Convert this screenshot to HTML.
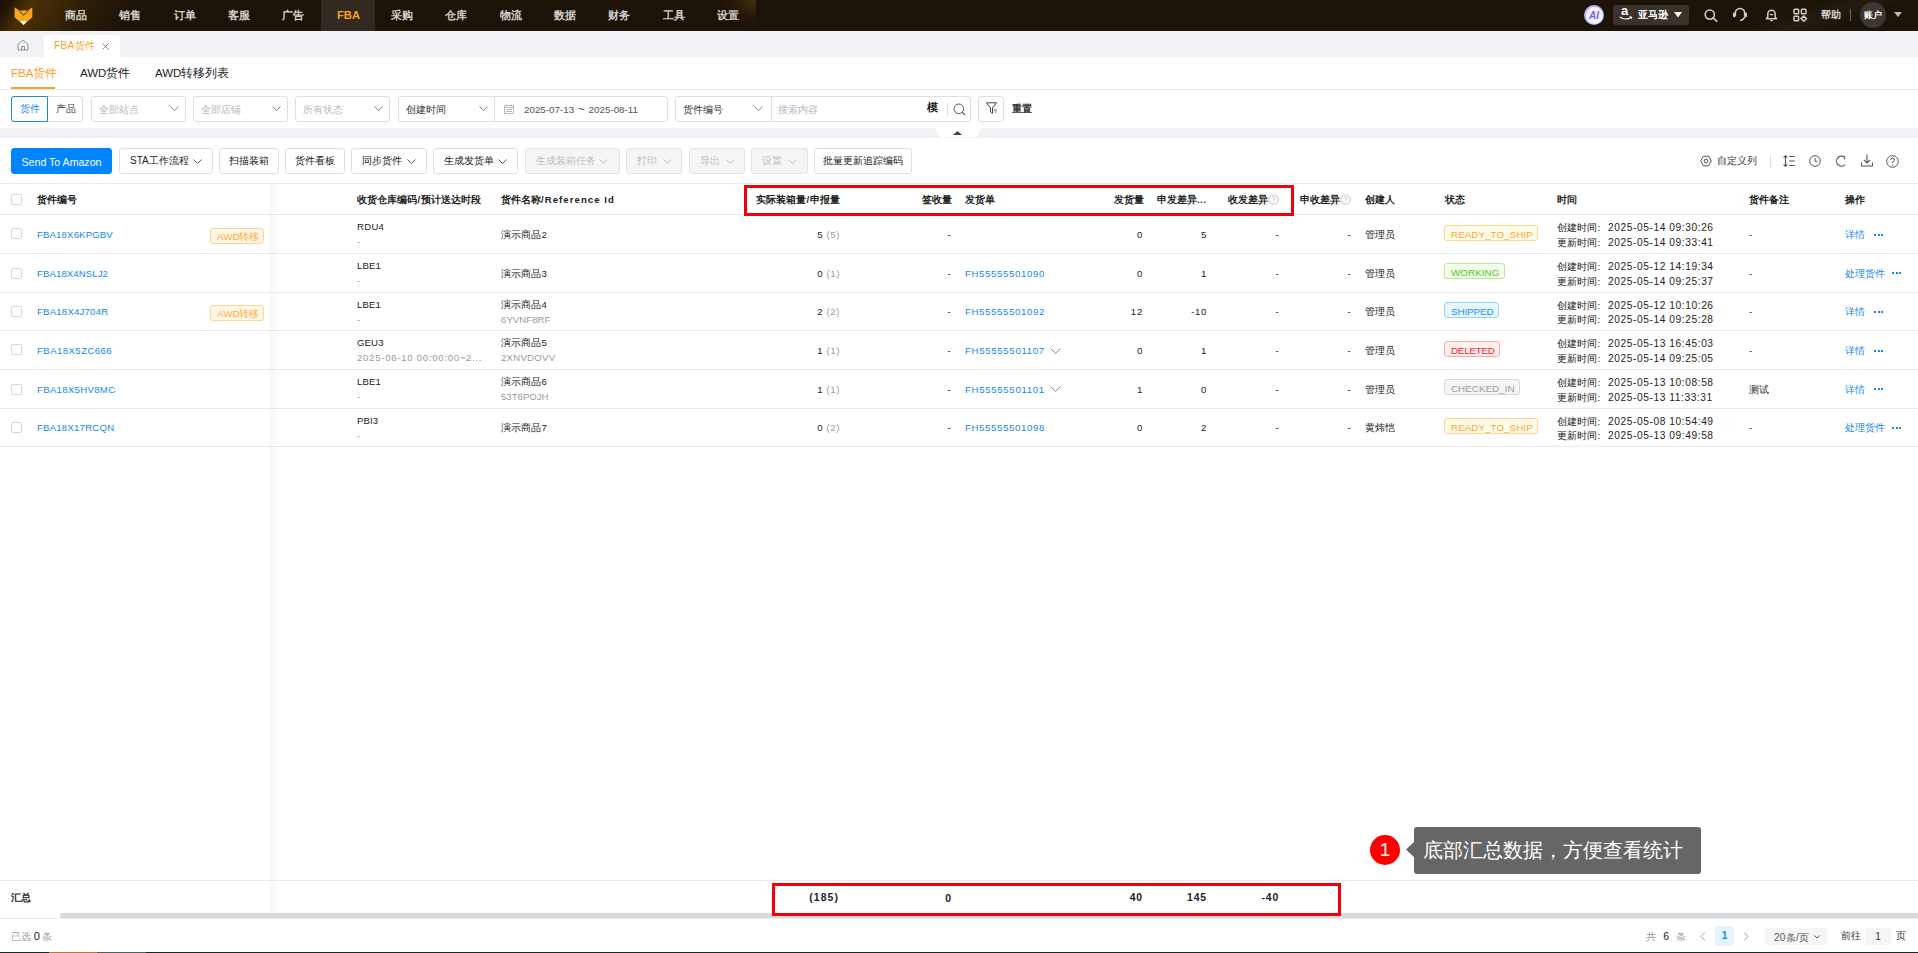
<!DOCTYPE html>
<html><head><meta charset="utf-8">
<style>
*{box-sizing:border-box;margin:0;padding:0}
html,body{width:1918px;height:953px;overflow:hidden;background:#fff}
body{position:relative;font-family:"Liberation Sans",sans-serif;font-size:10px;color:#222}
.a{position:absolute;white-space:nowrap}
/* nav */
#nav{position:absolute;left:0;top:0;width:1918px;height:31px;background:#1c1309;overflow:hidden}
#nav .glow{position:absolute;left:0;top:0;width:180px;height:31px;background:linear-gradient(122deg,#1a1107 0px,#221606 10px,#4a2e06 26px,#432a07 44px,#2c1d08 75px,#1c1309 120px)}
#nav .glow2{position:absolute;left:1700px;top:0;width:218px;height:31px;background:linear-gradient(160deg,rgba(255,255,255,0) 40%,rgba(255,240,220,.04) 55%,rgba(255,255,255,0) 70%)}
.ni{position:absolute;top:0;height:31px;line-height:31px;font-size:11.2px;color:#d2cdc8;font-weight:bold}
#tabbar{position:absolute;left:0;top:31px;width:1918px;height:26px;background:#f0f2f5}
.sel{position:absolute;top:96px;height:26px;border:1px solid #dcdfe6;border-radius:3px;background:#fff}
.ph{position:absolute;top:1px;line-height:24px;font-size:10px;color:#b4b8bf}
.chev{position:absolute}
.btn{position:absolute;top:148px;height:26px;border:1px solid #dcdfe6;border-radius:3px;background:#fff;line-height:24px;padding-top:0;font-size:10px;color:#222;text-align:center}
.btn.dis{background:#f5f5f5;color:#bdbdbd;border-color:#e4e4e4}
.th{position:absolute;top:185px;line-height:30px;font-size:9.6px;font-weight:bold;color:#222}
.hl{position:absolute;left:0;width:1918px;height:1px;background:#e8eaee}
.cb{position:absolute;left:11px;width:11px;height:11px;border:1px solid #d4d7dd;border-radius:2px;background:#fff}
.lk{color:#1687ef}
.g{color:#999}
.tag{position:absolute;height:16px;line-height:15px;padding-top:0;border:1px solid;border-radius:3px;font-size:9.8px;padding-left:6px;padding-right:0}
.n{letter-spacing:.4px}
.c{line-height:14px;font-size:9.6px}
.tm{font-size:11px;letter-spacing:.2px}
.dots{width:9px;height:2px}
.dots i{position:absolute;top:0;width:2px;height:2px;background:#1687ef}
.dots i:nth-child(1){left:0}.dots i:nth-child(2){left:3.5px}.dots i:nth-child(3){left:7px}
</style></head><body>

<!-- NAV -->
<div id="nav">
  <div class="glow"></div>
  <svg class="a" style="left:0;top:0" width="40" height="31" viewBox="0 0 40 31">
    <path d="M14.6 7.3 L19.3 10.4 L28.2 10.4 L32.3 7.3 L32.3 17.2 L23.5 25 L14.6 17.2 Z" fill="#f7a823"/>
    <path d="M19.3 10.6 L23.5 15.4 L28.2 10.6" fill="none" stroke="#3a2608" stroke-width="0.9"/>
    <path d="M20.2 21.3 L26.8 21.3 L23.5 25 Z" fill="#fff"/>
  </svg>
  <div class="a" style="left:321px;top:0;width:54px;height:31px;background:#322921"></div>
  <div class="ni" style="left:65px">商品</div>
  <div class="ni" style="left:119px">销售</div>
  <div class="ni" style="left:174px">订单</div>
  <div class="ni" style="left:228px">客服</div>
  <div class="ni" style="left:282px">广告</div>
  <div class="ni" style="left:337px;color:#f7a41d">FBA</div>
  <div class="ni" style="left:391px">采购</div>
  <div class="ni" style="left:445px">仓库</div>
  <div class="ni" style="left:500px">物流</div>
  <div class="ni" style="left:554px">数据</div>
  <div class="ni" style="left:608px">财务</div>
  <div class="ni" style="left:663px">工具</div>
  <div class="ni" style="left:717px">设置</div>

  <div class="glow2"></div>
  <div class="a" style="left:700px;top:0;width:56px;height:31px;background:radial-gradient(ellipse 40px 28px at 56px 0px,rgba(90,60,15,.7),rgba(60,40,10,.25) 60%,rgba(0,0,0,0) 100%)"></div>
  <div class="a" style="left:1584px;top:5px;width:20px;height:20px;border-radius:50%;background:linear-gradient(135deg,#c9a8ff,#7fd0ff);"></div>
  <div class="a" style="left:1585.5px;top:6.5px;width:17px;height:17px;border-radius:50%;background:#f4f2ff;"></div>
  <div class="a" style="left:1587px;top:6px;width:14px;line-height:19px;font-size:10px;font-weight:bold;font-style:italic;color:#7b5cf0;text-align:center">AI</div>
  <div class="a" style="left:1613px;top:5px;width:76px;height:20px;border-radius:3px;background:#3a332c"></div>
  <div class="a" style="left:1621px;top:1px;line-height:20px;font-size:13px;font-weight:bold;color:#fff">a</div>
  <svg class="a" style="left:1619px;top:16px" width="14" height="5" viewBox="0 0 14 5"><path d="M.8 1 Q6.5 4.8 12.5 1.2" fill="none" stroke="#fff" stroke-width="1.1"/><path d="M10.5 .6 L12.8 1 L12.3 3" fill="none" stroke="#fff" stroke-width=".9"/></svg>
  <div class="a ni" style="left:1638px;top:0;font-size:10px;color:#fff;line-height:30px">亚马逊</div>
  <svg class="a" style="left:1674px;top:12px" width="8" height="6" viewBox="0 0 8 6"><path d="M0 0 H8 L4 5.5 Z" fill="#fff"/></svg>
  <svg class="a" style="left:1704px;top:9px" width="14" height="13" viewBox="0 0 14 13"><circle cx="5.8" cy="5.6" r="4.6" fill="none" stroke="#d2cdc8" stroke-width="1.6"/><path d="M9.2 9 L12.6 12.2" stroke="#d2cdc8" stroke-width="1.7" stroke-linecap="round"/></svg>
  <svg class="a" style="left:1732px;top:7px" width="16" height="15" viewBox="0 0 16 15"><path d="M3.3 9 V6.2 A4.7 4.7 0 0 1 12.7 6.2 V9" fill="none" stroke="#d2cdc8" stroke-width="1.6"/><rect x="1" y="5.6" width="2.6" height="4.6" rx="1.2" fill="#d2cdc8"/><rect x="12.4" y="5.6" width="2.6" height="4.6" rx="1.2" fill="#d2cdc8"/><path d="M12.7 9.5 Q12 12.8 8 13.5" fill="none" stroke="#d2cdc8" stroke-width="1.4"/></svg>
  <svg class="a" style="left:1764px;top:8px" width="15" height="14" viewBox="0 0 15 14"><path d="M2.5 10.8 H12.5 L11.2 9 V6 A3.7 3.7 0 0 0 3.8 6 V9 Z" fill="none" stroke="#d2cdc8" stroke-width="1.5" stroke-linejoin="round"/><path d="M5.8 6.6 H9.2" stroke="#d2cdc8" stroke-width="1.3"/><path d="M6.3 12.6 H8.7" stroke="#d2cdc8" stroke-width="1.3"/></svg>
  <svg class="a" style="left:1793px;top:8px" width="15" height="14" viewBox="0 0 15 14"><rect x="1" y="1.2" width="4.6" height="4.6" rx=".8" fill="none" stroke="#d2cdc8" stroke-width="1.5"/><rect x="8.4" y="1.2" width="4.6" height="4.6" rx=".8" fill="none" stroke="#d2cdc8" stroke-width="1.5"/><rect x="1" y="8.2" width="4.6" height="4.6" rx=".8" fill="none" stroke="#d2cdc8" stroke-width="1.5"/><path d="M10.7 8 L13.4 10.6 L10.7 13.2 L8 10.6 Z" fill="none" stroke="#d2cdc8" stroke-width="1.5"/></svg>
  <div class="a ni" style="left:1821px;top:0;font-size:10px;color:#d8d3ce;line-height:30px">帮助</div>
  <div class="a" style="left:1850px;top:9px;width:1px;height:12px;background:#6a645e"></div>
  <div class="a" style="left:1860px;top:2px;width:26px;height:26px;border-radius:50%;background:#3c3731"></div>
  <div class="a ni" style="left:1864px;top:0;font-size:9px;color:#fff;line-height:30px">账户</div>
  <svg class="a" style="left:1894px;top:12px" width="8" height="6" viewBox="0 0 8 6"><path d="M0 0 H8 L4 5 Z" fill="#bdb8b3"/></svg>
</div>

<!-- TAB BAR -->
<div id="tabbar">
  <svg class="a" style="left:17px;top:8px" width="12" height="12" viewBox="0 0 12 12"><path d="M1 5.5 L6 1 L11 5.5 V11 H1 Z M4.5 11 V7.5 H7.5 V11" fill="none" stroke="#8a8f98" stroke-width="1"/></svg>
  <div class="a" style="left:44px;top:4px;width:76px;height:22px;background:#fff;border-radius:3px 3px 0 0"></div>
  <div class="a" style="left:54px;top:4px;line-height:22px;font-size:10.2px;color:#ff9d26;letter-spacing:.25px">FBA货件</div>
  <svg class="a" style="left:101.5px;top:11.5px" width="7" height="7" viewBox="0 0 7 7"><path d="M.5 .5 L6.5 6.5 M6.5 .5 L.5 6.5" stroke="#8a8a8a" stroke-width="1"/></svg>
</div>

<!-- SUB TABS -->
<div class="a" style="left:11px;top:65px;line-height:16px;font-size:11.5px;color:#ff9d26">FBA货件</div>
<div class="a" style="left:80px;top:65px;line-height:16px;font-size:11.5px;color:#222">AWD货件</div>
<div class="a" style="left:155px;top:65px;line-height:16px;font-size:11.5px;color:#222">AWD转移列表</div>
<div class="a" style="left:11px;top:87px;width:44px;height:2px;background:#ff9d26"></div>
<div class="a" style="left:0;top:89px;width:1918px;height:1px;background:#e8eaee"></div>

<!-- FILTERS -->
<div class="sel" style="left:11px;width:72px"></div>
<div class="a" style="left:11px;top:96px;width:37px;height:26px;border:1px solid #1687ef;border-radius:3px 0 0 3px"></div>
<div class="a" style="left:20px;top:96px;line-height:26px;font-size:10px;color:#1687ef">货件</div>
<div class="a" style="left:56px;top:96px;line-height:26px;font-size:10px;color:#444">产品</div>

<div class="sel" style="left:91px;width:95px"><span class="ph" style="left:7px">全部站点</span><svg class="chev" style="left:78px;top:8.5px" width="9" height="5" viewBox="0 0 9 5"><path d="M.5 .5 L4.5 4.5 L8.5 .5" fill="none" stroke="#888" stroke-width="1"/></svg></div>
<div class="sel" style="left:193px;width:95px"><span class="ph" style="left:7px">全部店铺</span><svg class="chev" style="left:78px;top:8.5px" width="9" height="5" viewBox="0 0 9 5"><path d="M.5 .5 L4.5 4.5 L8.5 .5" fill="none" stroke="#888" stroke-width="1"/></svg></div>
<div class="sel" style="left:295px;width:95px"><span class="ph" style="left:7px">所有状态</span><svg class="chev" style="left:78px;top:8.5px" width="9" height="5" viewBox="0 0 9 5"><path d="M.5 .5 L4.5 4.5 L8.5 .5" fill="none" stroke="#888" stroke-width="1"/></svg></div>
<div class="sel" style="left:398px;width:270px"><span class="ph" style="left:7px;color:#333">创建时间</span><svg class="chev" style="left:80px;top:8.5px" width="9" height="5" viewBox="0 0 9 5"><path d="M.5 .5 L4.5 4.5 L8.5 .5" fill="none" stroke="#888" stroke-width="1"/></svg>
  <div class="a" style="left:95px;top:0;width:1px;height:24px;background:#dcdfe6"></div>
  <svg class="a" style="left:105px;top:7px" width="10" height="10" viewBox="0 0 10 10"><path d="M.5 1.5 H9.5 V9.5 H.5 Z M.5 3.5 H9.5 M2.5 .5 V2 M7.5 .5 V2 M2 5.5 H8 M2 7.5 H8" fill="none" stroke="#aaa" stroke-width=".8"/></svg>
  <span class="ph" style="left:125px;color:#555;font-size:9.8px;line-height:25px;top:0">2025-07-13 <span style="font-size:12px;margin:0 1px">~</span> 2025-08-11</span>
</div>
<div class="sel" style="left:675px;width:296px"><span class="ph" style="left:7px;color:#333">货件编号</span><svg class="chev" style="left:78px;top:8.5px" width="9" height="5" viewBox="0 0 9 5"><path d="M.5 .5 L4.5 4.5 L8.5 .5" fill="none" stroke="#888" stroke-width="1"/></svg>
  <div class="a" style="left:95px;top:0;width:1px;height:24px;background:#dcdfe6"></div>
  <span class="ph" style="left:102px">搜索内容</span>
  <span class="a" style="left:251px;top:-2px;line-height:24px;font-size:11px;font-weight:bold;color:#222">模</span>
  <div class="a" style="left:271px;top:6px;width:1px;height:12px;background:#ddd"></div>
  <svg class="a" style="left:277px;top:6px" width="13" height="13" viewBox="0 0 13 13"><circle cx="5.8" cy="5.8" r="4.8" fill="none" stroke="#555" stroke-width="1"/><path d="M9.3 9.3 L12 12" stroke="#555" stroke-width="1.1"/></svg>
</div>
<div class="sel" style="left:978px;width:26px"><svg class="a" style="left:7px;top:5px" width="12" height="13" viewBox="0 0 12 13"><path d="M.5 .8 H10.5 L6.5 6 V11.5 L4.5 10 V6 Z" fill="none" stroke="#444" stroke-width="1"/><path d="M8 8 H11 M8.5 10 H10.5" stroke="#444" stroke-width=".8"/></svg></div>
<div class="a" style="left:1012px;top:96px;line-height:26px;font-size:10px;font-weight:bold;color:#333">重置</div>

<!-- GRAY BAND -->
<div class="a" style="left:0;top:128px;width:1918px;height:10px;background:#f0f2f5"></div>
<svg class="a" style="left:935px;top:128px" width="46" height="10" viewBox="0 0 46 10"><path d="M0 0 H46 L43 7 Q42 9.3 39.5 9.3 H6.5 Q4 9.3 3 7 Z" fill="#fff"/></svg>
<svg class="a" style="left:953px;top:131px" width="9" height="4" viewBox="0 0 9 4"><path d="M0 4 L4.5 0 L9 4 Z" fill="#444"/></svg>

<!-- TOOLBAR -->
<div class="btn" style="left:11px;width:101px;background:#0084ff;border-color:#0084ff;color:#fff;font-size:10.6px;line-height:25px;padding-top:1px">Send To Amazon</div>
<div class="btn" style="left:119px;width:94px;text-align:left;padding-left:10px">STA工作流程<svg class="a" style="left:73px;top:10px" width="9" height="5" viewBox="0 0 9 5"><path d="M.5 .5 L4.5 4.5 L8.5 .5" fill="none" stroke="#555" stroke-width="1"/></svg></div>
<div class="btn" style="left:219px;width:60px">扫描装箱</div>
<div class="btn" style="left:285px;width:60px">货件看板</div>
<div class="btn" style="left:351px;width:76px;text-align:left;padding-left:10px">同步货件<svg class="a" style="left:55px;top:10px" width="9" height="5" viewBox="0 0 9 5"><path d="M.5 .5 L4.5 4.5 L8.5 .5" fill="none" stroke="#555" stroke-width="1"/></svg></div>
<div class="btn" style="left:433px;width:85px;text-align:left;padding-left:10px">生成发货单<svg class="a" style="left:64px;top:10px" width="9" height="5" viewBox="0 0 9 5"><path d="M.5 .5 L4.5 4.5 L8.5 .5" fill="none" stroke="#555" stroke-width="1"/></svg></div>
<div class="btn dis" style="left:525px;width:95px;text-align:left;padding-left:10px">生成装箱任务<svg class="a" style="left:73px;top:10px" width="9" height="5" viewBox="0 0 9 5"><path d="M.5 .5 L4.5 4.5 L8.5 .5" fill="none" stroke="#bbb" stroke-width="1"/></svg></div>
<div class="btn dis" style="left:626px;width:56px;text-align:left;padding-left:10px">打印<svg class="a" style="left:36px;top:10px" width="9" height="5" viewBox="0 0 9 5"><path d="M.5 .5 L4.5 4.5 L8.5 .5" fill="none" stroke="#bbb" stroke-width="1"/></svg></div>
<div class="btn dis" style="left:689px;width:56px;text-align:left;padding-left:10px">导出<svg class="a" style="left:36px;top:10px" width="9" height="5" viewBox="0 0 9 5"><path d="M.5 .5 L4.5 4.5 L8.5 .5" fill="none" stroke="#bbb" stroke-width="1"/></svg></div>
<div class="btn dis" style="left:751px;width:57px;text-align:left;padding-left:10px">设置<svg class="a" style="left:36px;top:10px" width="9" height="5" viewBox="0 0 9 5"><path d="M.5 .5 L4.5 4.5 L8.5 .5" fill="none" stroke="#bbb" stroke-width="1"/></svg></div>
<div class="btn" style="left:814px;width:98px">批量更新追踪编码</div>

<!-- right tools -->
<svg class="a" style="left:1700px;top:155px" width="12" height="12" viewBox="0 0 12 12"><path d="M.7 6 L3.4 1.2 H8.6 L11.3 6 L8.6 10.8 H3.4 Z" fill="none" stroke="#555" stroke-width="1"/><circle cx="6" cy="6" r="1.9" fill="none" stroke="#555" stroke-width="1"/></svg>
<div class="a" style="left:1717px;top:148px;line-height:26px;font-size:10px;color:#333">自定义列</div>
<div class="a" style="left:1770px;top:155px;width:1px;height:12px;background:#ddd"></div>
<svg class="a" style="left:1783px;top:155px" width="13" height="12" viewBox="0 0 13 12"><path d="M2.5 .8 V11.2 M.6 2.6 L2.5 .7 L4.4 2.6 M.6 9.4 L2.5 11.3 L4.4 9.4 M6.2 1.5 H11.8 M6.2 6 H11.8 M6.2 10.5 H11.8" fill="none" stroke="#555" stroke-width="1.1"/></svg>
<svg class="a" style="left:1809px;top:155px" width="12" height="12" viewBox="0 0 12 12"><circle cx="6" cy="6" r="5.3" fill="none" stroke="#555" stroke-width="1"/><path d="M6 3 V6.3 H8.5" fill="none" stroke="#555" stroke-width="1"/></svg>
<svg class="a" style="left:1835px;top:155px" width="12" height="12" viewBox="0 0 12 12"><path d="M9.6 2.2 A5 5 0 1 0 10 9.6" fill="none" stroke="#555" stroke-width="1.1"/><path d="M7.4 1.4 L9.8 2 L9.4 4.4" fill="none" stroke="#555" stroke-width="1"/></svg>
<svg class="a" style="left:1861px;top:154px" width="12" height="13" viewBox="0 0 12 13"><path d="M6 .5 V9 M2.8 5.8 L6 9 L9.2 5.8 M.5 8.5 V12 H11.5 V8.5" fill="none" stroke="#555" stroke-width="1.1"/></svg>
<svg class="a" style="left:1886px;top:155px" width="13" height="13" viewBox="0 0 13 13"><circle cx="6.5" cy="6.5" r="5.8" fill="none" stroke="#555" stroke-width="1"/><path d="M4.6 5 A1.9 1.9 0 1 1 6.5 7 V8" fill="none" stroke="#555" stroke-width="1"/><circle cx="6.5" cy="9.8" r=".6" fill="#555"/></svg>

<!-- TABLE -->
<div class="hl" style="top:183px"></div>
<div class="hl" style="top:214px"></div>
<div class="cb" style="top:194px"></div>
<div class="th" style="left:37px">货件编号</div>
<div class="th" style="left:357px">收货仓库编码<span style="margin:0 .5px">/</span>预计送达时段</div>
<div class="th" style="left:501px">货件名称<span style="letter-spacing:1.05px">/Reference Id</span></div>
<div class="th" style="left:756px">实际装箱量<span style="margin:0 .5px">/</span>申报量</div>
<div class="th" style="left:922px">签收量</div>
<div class="th" style="left:965px">发货单</div>
<div class="th" style="left:1114px">发货量</div>
<div class="th" style="left:1157px">申发差异<span style="letter-spacing:.4px">...</span></div>
<div class="th" style="left:1228px">收发差异</div>
<div class="th" style="left:1300px">申收差异</div>
<div class="th" style="left:1365px">创建人</div>
<div class="th" style="left:1445px">状态</div>
<div class="th" style="left:1557px">时间</div>
<div class="th" style="left:1749px">货件备注</div>
<div class="th" style="left:1845px">操作</div>
<svg class="a" style="left:1268px;top:194px" width="11" height="11" viewBox="0 0 11 11"><circle cx="5.5" cy="5.5" r="4.8" fill="none" stroke="#bbb" stroke-width=".9"/><path d="M4 4.3 A1.5 1.5 0 1 1 5.5 5.8 V6.6" fill="none" stroke="#bbb" stroke-width=".9"/><circle cx="5.5" cy="8.2" r=".5" fill="#bbb"/></svg>
<svg class="a" style="left:1340px;top:194px" width="11" height="11" viewBox="0 0 11 11"><circle cx="5.5" cy="5.5" r="4.8" fill="none" stroke="#bbb" stroke-width=".9"/><path d="M4 4.3 A1.5 1.5 0 1 1 5.5 5.8 V6.6" fill="none" stroke="#bbb" stroke-width=".9"/><circle cx="5.5" cy="8.2" r=".5" fill="#bbb"/></svg>

<div id="rows">
<div class="hl" style="top:253px"></div>
<div class="cb" style="top:228px"></div>
<div class="a c lk" style="left:37px;top:227.5px;letter-spacing:0.15px;">FBA18X6KPGBV</div>
<div class="tag" style="left:210px;top:228px;width:54px;background:#fff7e6;border-color:#ffd591;color:#ffa940;">AWD转移</div>
<div class="a c " style="left:357px;top:220.0px;letter-spacing:0.26px;">RDU4</div>
<div class="a c g" style="left:357px;top:235.0px;letter-spacing:0.27px;">-</div>
<div class="a c " style="left:501px;top:227.5px;letter-spacing:0.15px;">演示商品2</div>
<div class="a c " style="right:1078px;top:227.5px;letter-spacing:0.60px;">5 <span class="g">(5)</span></div>
<div class="a c " style="right:967px;top:227.5px;letter-spacing:0.27px;">-</div>
<div class="a c " style="right:775px;top:227.5px;letter-spacing:0.77px;">0</div>
<div class="a c " style="right:711px;top:227.5px;letter-spacing:0.77px;">5</div>
<div class="a c " style="right:639px;top:227.5px;letter-spacing:0.27px;">-</div>
<div class="a c " style="right:567px;top:227.5px;letter-spacing:0.27px;">-</div>
<div class="a c " style="left:1365px;top:227.5px;">管理员</div>
<div class="tag" style="left:1444px;top:225px;width:94px;background:#fffbe9;border-color:#ffd591;color:#ffa630;font-size:9.8px;letter-spacing:0.06px;padding-top:.5px">READY_TO_SHIP</div>
<div class="a c " style="left:1557px;top:221.0px;letter-spacing:0.11px;">创建时间:</div>
<div class="a c " style="left:1608px;top:221.0px;letter-spacing:0.67px;;font-size:10.2px;letter-spacing:.58px">2025-05-14 09:30:26</div>
<div class="a c " style="left:1557px;top:235.5px;letter-spacing:0.11px;">更新时间:</div>
<div class="a c " style="left:1608px;top:235.5px;letter-spacing:0.67px;;font-size:10.2px;letter-spacing:.58px">2025-05-14 09:33:41</div>
<div class="a c " style="left:1749px;top:227.5px;letter-spacing:0.27px;">-</div>
<div class="a c lk" style="left:1845px;top:227.5px;">详情</div>
<div class="a dots" style="left:1874px;top:234px"><i></i><i></i><i></i></div>
<div class="hl" style="top:292px"></div>
<div class="cb" style="top:268px"></div>
<div class="a c lk" style="left:37px;top:266.5px;letter-spacing:0.10px;">FBA18X4NSLJ2</div>
<div class="a c " style="left:357px;top:259.0px;letter-spacing:0.16px;">LBE1</div>
<div class="a c g" style="left:357px;top:274.0px;letter-spacing:0.27px;">-</div>
<div class="a c " style="left:501px;top:266.5px;letter-spacing:0.15px;">演示商品3</div>
<div class="a c " style="right:1078px;top:266.5px;letter-spacing:0.60px;">0 <span class="g">(1)</span></div>
<div class="a c " style="right:967px;top:266.5px;letter-spacing:0.27px;">-</div>
<div class="a c lk" style="left:965px;top:266.5px;letter-spacing:0.65px;">FH55555501090</div>
<div class="a c " style="right:775px;top:266.5px;letter-spacing:0.77px;">0</div>
<div class="a c " style="right:711px;top:266.5px;letter-spacing:0.77px;">1</div>
<div class="a c " style="right:639px;top:266.5px;letter-spacing:0.27px;">-</div>
<div class="a c " style="right:567px;top:266.5px;letter-spacing:0.27px;">-</div>
<div class="a c " style="left:1365px;top:266.5px;">管理员</div>
<div class="tag" style="left:1444px;top:263px;width:61px;background:#f3ffeb;border-color:#b7eb8f;color:#52c41a;font-size:9.8px;letter-spacing:0.08px;padding-top:.5px">WORKING</div>
<div class="a c " style="left:1557px;top:260.0px;letter-spacing:0.11px;">创建时间:</div>
<div class="a c " style="left:1608px;top:260.0px;letter-spacing:0.67px;;font-size:10.2px;letter-spacing:.58px">2025-05-12 14:19:34</div>
<div class="a c " style="left:1557px;top:274.5px;letter-spacing:0.11px;">更新时间:</div>
<div class="a c " style="left:1608px;top:274.5px;letter-spacing:0.67px;;font-size:10.2px;letter-spacing:.58px">2025-05-14 09:25:37</div>
<div class="a c " style="left:1749px;top:266.5px;letter-spacing:0.27px;">-</div>
<div class="a c lk" style="left:1845px;top:266.5px;">处理货件</div>
<div class="a dots" style="left:1892px;top:272px"><i></i><i></i><i></i></div>
<div class="hl" style="top:330px"></div>
<div class="cb" style="top:306px"></div>
<div class="a c lk" style="left:37px;top:305.0px;letter-spacing:0.21px;">FBA18X4J704R</div>
<div class="tag" style="left:210px;top:305px;width:54px;background:#fff7e6;border-color:#ffd591;color:#ffa940;">AWD转移</div>
<div class="a c " style="left:357px;top:297.5px;letter-spacing:0.16px;">LBE1</div>
<div class="a c g" style="left:357px;top:312.5px;letter-spacing:0.27px;">-</div>
<div class="a c " style="left:501px;top:297.5px;letter-spacing:0.15px;">演示商品4</div>
<div class="a c g" style="left:501px;top:312.5px;letter-spacing:0.06px;">6YVNF8RF</div>
<div class="a c " style="right:1078px;top:305.0px;letter-spacing:0.60px;">2 <span class="g">(2)</span></div>
<div class="a c " style="right:967px;top:305.0px;letter-spacing:0.27px;">-</div>
<div class="a c lk" style="left:965px;top:305.0px;letter-spacing:0.65px;">FH55555501092</div>
<div class="a c " style="right:775px;top:305.0px;letter-spacing:0.77px;">12</div>
<div class="a c " style="right:711px;top:305.0px;letter-spacing:0.60px;">-10</div>
<div class="a c " style="right:639px;top:305.0px;letter-spacing:0.27px;">-</div>
<div class="a c " style="right:567px;top:305.0px;letter-spacing:0.27px;">-</div>
<div class="a c " style="left:1365px;top:305.0px;">管理员</div>
<div class="tag" style="left:1444px;top:302px;width:55px;background:#e8f6ff;border-color:#91d5ff;color:#1890ff;font-size:9.8px;letter-spacing:-0.09px;padding-top:.5px">SHIPPED</div>
<div class="a c " style="left:1557px;top:298.5px;letter-spacing:0.11px;">创建时间:</div>
<div class="a c " style="left:1608px;top:298.5px;letter-spacing:0.67px;;font-size:10.2px;letter-spacing:.58px">2025-05-12 10:10:26</div>
<div class="a c " style="left:1557px;top:313.0px;letter-spacing:0.11px;">更新时间:</div>
<div class="a c " style="left:1608px;top:313.0px;letter-spacing:0.67px;;font-size:10.2px;letter-spacing:.58px">2025-05-14 09:25:28</div>
<div class="a c " style="left:1749px;top:305.0px;letter-spacing:0.27px;">-</div>
<div class="a c lk" style="left:1845px;top:305.0px;">详情</div>
<div class="a dots" style="left:1874px;top:311px"><i></i><i></i><i></i></div>
<div class="hl" style="top:369px"></div>
<div class="cb" style="top:344px"></div>
<div class="a c lk" style="left:37px;top:343.5px;letter-spacing:0.44px;">FBA18X5ZC666</div>
<div class="a c " style="left:357px;top:336.0px;letter-spacing:0.12px;">GEU3</div>
<div class="a c g" style="left:357px;top:351.0px;letter-spacing:0.72px;">2025-06-10 00:00:00~2...</div>
<div class="a c " style="left:501px;top:336.0px;letter-spacing:0.15px;">演示商品5</div>
<div class="a c g" style="left:501px;top:351.0px;letter-spacing:0.26px;">2XNVDOVV</div>
<div class="a c " style="right:1078px;top:343.5px;letter-spacing:0.60px;">1 <span class="g">(1)</span></div>
<div class="a c " style="right:967px;top:343.5px;letter-spacing:0.27px;">-</div>
<div class="a c lk" style="left:965px;top:343.5px;letter-spacing:0.70px;">FH55555501107</div>
<svg class="a" style="left:1050px;top:348px" width="11" height="6" viewBox="0 0 11 6"><path d="M.5 .5 L5.5 5.3 L10.5 .5" fill="none" stroke="#888" stroke-width="1"/></svg>
<div class="a c " style="right:775px;top:343.5px;letter-spacing:0.77px;">0</div>
<div class="a c " style="right:711px;top:343.5px;letter-spacing:0.77px;">1</div>
<div class="a c " style="right:639px;top:343.5px;letter-spacing:0.27px;">-</div>
<div class="a c " style="right:567px;top:343.5px;letter-spacing:0.27px;">-</div>
<div class="a c " style="left:1365px;top:343.5px;">管理员</div>
<div class="tag" style="left:1444px;top:341px;width:56px;background:#fff0f0;border-color:#ffa3a3;color:#f5222d;font-size:9.8px;letter-spacing:-0.21px;padding-top:.5px">DELETED</div>
<div class="a c " style="left:1557px;top:337.0px;letter-spacing:0.11px;">创建时间:</div>
<div class="a c " style="left:1608px;top:337.0px;letter-spacing:0.67px;;font-size:10.2px;letter-spacing:.58px">2025-05-13 16:45:03</div>
<div class="a c " style="left:1557px;top:351.5px;letter-spacing:0.11px;">更新时间:</div>
<div class="a c " style="left:1608px;top:351.5px;letter-spacing:0.67px;;font-size:10.2px;letter-spacing:.58px">2025-05-14 09:25:05</div>
<div class="a c " style="left:1749px;top:343.5px;letter-spacing:0.27px;">-</div>
<div class="a c lk" style="left:1845px;top:343.5px;">详情</div>
<div class="a dots" style="left:1874px;top:350px"><i></i><i></i><i></i></div>
<div class="hl" style="top:408px"></div>
<div class="cb" style="top:384px"></div>
<div class="a c lk" style="left:37px;top:382.5px;letter-spacing:0.31px;">FBA18X5HV8MC</div>
<div class="a c " style="left:357px;top:375.0px;letter-spacing:0.16px;">LBE1</div>
<div class="a c g" style="left:357px;top:390.0px;letter-spacing:0.27px;">-</div>
<div class="a c " style="left:501px;top:375.0px;letter-spacing:0.15px;">演示商品6</div>
<div class="a c g" style="left:501px;top:390.0px;letter-spacing:0.01px;">53T6POJH</div>
<div class="a c " style="right:1078px;top:382.5px;letter-spacing:0.60px;">1 <span class="g">(1)</span></div>
<div class="a c " style="right:967px;top:382.5px;letter-spacing:0.27px;">-</div>
<div class="a c lk" style="left:965px;top:382.5px;letter-spacing:0.70px;">FH55555501101</div>
<svg class="a" style="left:1050px;top:386px" width="11" height="6" viewBox="0 0 11 6"><path d="M.5 .5 L5.5 5.3 L10.5 .5" fill="none" stroke="#888" stroke-width="1"/></svg>
<div class="a c " style="right:775px;top:382.5px;letter-spacing:0.77px;">1</div>
<div class="a c " style="right:711px;top:382.5px;letter-spacing:0.77px;">0</div>
<div class="a c " style="right:639px;top:382.5px;letter-spacing:0.27px;">-</div>
<div class="a c " style="right:567px;top:382.5px;letter-spacing:0.27px;">-</div>
<div class="a c " style="left:1365px;top:382.5px;">管理员</div>
<div class="tag" style="left:1444px;top:379px;width:76px;background:#f5f5f5;border-color:#d9d9d9;color:#999;font-size:9.8px;letter-spacing:0.04px;padding-top:.5px">CHECKED_IN</div>
<div class="a c " style="left:1557px;top:376.0px;letter-spacing:0.11px;">创建时间:</div>
<div class="a c " style="left:1608px;top:376.0px;letter-spacing:0.67px;;font-size:10.2px;letter-spacing:.58px">2025-05-13 10:08:58</div>
<div class="a c " style="left:1557px;top:390.5px;letter-spacing:0.11px;">更新时间:</div>
<div class="a c " style="left:1608px;top:390.5px;letter-spacing:0.71px;;font-size:10.2px;letter-spacing:.58px">2025-05-13 11:33:31</div>
<div class="a c " style="left:1749px;top:382.5px;">测试</div>
<div class="a c lk" style="left:1845px;top:382.5px;">详情</div>
<div class="a dots" style="left:1874px;top:388px"><i></i><i></i><i></i></div>
<div class="hl" style="top:446px"></div>
<div class="cb" style="top:422px"></div>
<div class="a c lk" style="left:37px;top:421.0px;letter-spacing:0.22px;">FBA18X17RCQN</div>
<div class="a c " style="left:357px;top:413.5px;letter-spacing:0.13px;">PBI3</div>
<div class="a c g" style="left:357px;top:428.5px;letter-spacing:0.27px;">-</div>
<div class="a c " style="left:501px;top:421.0px;letter-spacing:0.15px;">演示商品7</div>
<div class="a c " style="right:1078px;top:421.0px;letter-spacing:0.60px;">0 <span class="g">(2)</span></div>
<div class="a c " style="right:967px;top:421.0px;letter-spacing:0.27px;">-</div>
<div class="a c lk" style="left:965px;top:421.0px;letter-spacing:0.65px;">FH55555501098</div>
<div class="a c " style="right:775px;top:421.0px;letter-spacing:0.77px;">0</div>
<div class="a c " style="right:711px;top:421.0px;letter-spacing:0.77px;">2</div>
<div class="a c " style="right:639px;top:421.0px;letter-spacing:0.27px;">-</div>
<div class="a c " style="right:567px;top:421.0px;letter-spacing:0.27px;">-</div>
<div class="a c " style="left:1365px;top:421.0px;">黄炜恺</div>
<div class="tag" style="left:1444px;top:418px;width:94px;background:#fffbe9;border-color:#ffd591;color:#ffa630;font-size:9.8px;letter-spacing:0.06px;padding-top:.5px">READY_TO_SHIP</div>
<div class="a c " style="left:1557px;top:414.5px;letter-spacing:0.11px;">创建时间:</div>
<div class="a c " style="left:1608px;top:414.5px;letter-spacing:0.67px;;font-size:10.2px;letter-spacing:.58px">2025-05-08 10:54:49</div>
<div class="a c " style="left:1557px;top:429.0px;letter-spacing:0.11px;">更新时间:</div>
<div class="a c " style="left:1608px;top:429.0px;letter-spacing:0.67px;;font-size:10.2px;letter-spacing:.58px">2025-05-13 09:49:58</div>
<div class="a c " style="left:1749px;top:421.0px;letter-spacing:0.27px;">-</div>
<div class="a c lk" style="left:1845px;top:421.0px;">处理货件</div>
<div class="a dots" style="left:1892px;top:427px"><i></i><i></i><i></i></div>
</div><!--/rows-->


<!-- fixed column shadow -->
<div class="a" style="left:270px;top:184px;width:10px;height:729px;background:linear-gradient(to right,rgba(0,0,0,.04),rgba(0,0,0,0))"></div>

<!-- tooltip -->
<div class="a" style="left:1370px;top:835px;width:30px;height:30px;border-radius:50%;background:#f00;color:#fff;font-size:19px;line-height:30px;text-align:center">1</div>
<div class="a" style="left:1414px;top:827px;width:287px;height:47px;background:#666;border-radius:3px"></div>
<svg class="a" style="left:1405px;top:841px" width="10" height="17" viewBox="0 0 10 17"><path d="M10 0 L1 8.5 L10 17 Z" fill="#666"/></svg>
<div class="a" style="left:1423px;top:827px;line-height:47px;font-size:20px;color:#fff">底部汇总数据，方便查看统计</div>

<!-- summary -->
<div class="hl" style="top:880px"></div>
<div class="a" style="left:11px;top:891px;line-height:14px;font-size:9.6px;font-weight:bold">汇总</div>
<div class="a c" style="right:1079px;top:891px;font-weight:bold;letter-spacing:1.1px;font-size:10.4px">(185)</div>
<div class="a c" style="right:967px;top:891px;font-weight:bold;font-size:10.5px">0</div>
<div class="a c" style="right:775px;top:891px;font-weight:bold;letter-spacing:.9px;font-size:10.4px">40</div>
<div class="a c" style="right:711px;top:891px;font-weight:bold;letter-spacing:.9px;font-size:10.4px">145</div>
<div class="a c" style="right:639px;top:891px;font-weight:bold;letter-spacing:.8px;font-size:10.4px">-40</div>

<!-- scrollbar -->
<div class="a" style="left:60px;top:913px;width:1858px;height:5px;background:#d8d9dd;border-radius:3px 0 0 3px"></div>
<div class="a" style="left:0;top:918px;width:1918px;height:1px;background:#e8eaee"></div>

<!-- footer -->
<div class="a c" style="left:11px;top:929px;color:#999">已选 <b style="color:#222;font-weight:normal;font-size:11px">0</b> 条</div>
<div class="a c" style="left:1646px;top:929px;color:#999;word-spacing:4.5px">共 <span style="color:#222;font-size:10.5px">6</span> 条</div>
<svg class="a" style="left:1700px;top:932px" width="6" height="9" viewBox="0 0 6 9"><path d="M5 .5 L1 4.5 L5 8.5" fill="none" stroke="#999" stroke-width="1"/></svg>
<div class="a" style="left:1715px;top:926px;width:19px;height:20px;background:#e6f4ff;border-radius:2px;color:#1687ef;font-weight:bold;text-align:center;line-height:20px">1</div>
<svg class="a" style="left:1743px;top:932px" width="6" height="9" viewBox="0 0 6 9"><path d="M1 .5 L5 4.5 L1 8.5" fill="none" stroke="#999" stroke-width="1"/></svg>
<div class="a" style="left:1765px;top:928px;width:62px;height:17px;background:#f5f5f5;border-radius:2px;line-height:17px;padding-left:9px;padding-top:1px;color:#555;letter-spacing:.3px">20条/页</div>
<svg class="a" style="left:1814px;top:935px" width="6" height="4" viewBox="0 0 6 4"><path d="M.5 .5 L3 3 L5.5 .5" fill="none" stroke="#555" stroke-width="1"/></svg>
<div class="a c" style="left:1841px;top:929px;color:#333">前往</div>
<div class="a" style="left:1865px;top:928px;width:26px;height:17px;background:#f5f5f5;border-radius:2px;line-height:17px;text-align:center;color:#333">1</div>
<div class="a c" style="left:1896px;top:929px;color:#333">页</div>

<!-- bottom strip -->
<div class="a" style="left:0;top:952px;width:1918px;height:1px;background:#1b2332"></div>
<div class="a" style="left:49px;top:952px;width:48px;height:1px;background:#b5793a"></div>
<div class="a" style="left:97px;top:952px;width:49px;height:1px;background:#555a63"></div>
<!-- red boxes -->
<div class="a" style="left:744px;top:185px;width:550px;height:31px;border:3px solid #f2000a"></div>
<div class="a" style="left:772px;top:883px;width:569px;height:33px;border:3px solid #f2000a"></div>

</body></html>
